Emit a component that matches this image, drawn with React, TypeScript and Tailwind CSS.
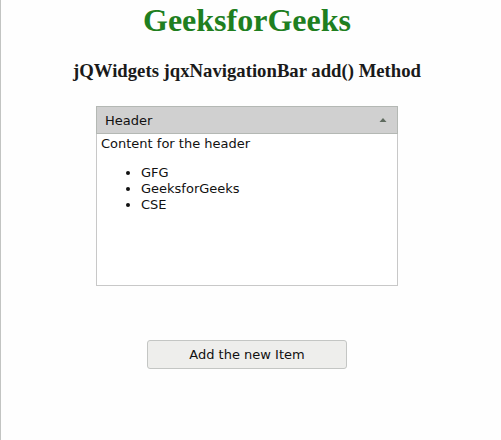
export default function App() {
  const items = ['GFG', 'GeeksforGeeks', 'CSE']

  return (
    <div className="min-h-[440px] w-[501px] bg-[#fefefe]">
      <div className="ml-0 min-h-[440px] w-[493px] border-l border-[#c2c4c2] pb-10">
        <h1 className="pt-[2px] text-center font-['Liberation_Serif',serif] text-[32px] font-bold leading-[37px] text-[#1f7f1f]">
          GeeksforGeeks
        </h1>
        <h3 className="mt-[21px] text-center font-['Liberation_Serif',serif] text-[18.72px] font-bold leading-[22px] text-[#1a1a1a]">
          jQWidgets jqxNavigationBar add() Method
        </h3>

        <div className="mx-auto mt-[24px] w-[302px] font-['DejaVu_Sans',sans-serif] text-[13px] leading-[16px] text-[#111]">
          <div className="flex h-[28px] items-start justify-between border border-[#b4b8b4] bg-[#d0d0d0] pl-[8px] pr-[10px] pt-[6px]">
            <span>Header</span>
            <svg width="8" height="6" viewBox="0 0 8 6" className="mt-[4px]">
              <path d="M0.5 5 L4 1 L7.5 5 Z" fill="#5f6b5f" />
            </svg>
          </div>
          <div className="h-[152px] border-x border-b border-[#c8c8c8] bg-white pl-[4px] pt-[2px]">
            <div>Content for the header</div>
            <ul className="my-[13px] list-disc pl-[40px]">
              {items.map((item) => (
                <li key={item}>{item}</li>
              ))}
            </ul>
          </div>
        </div>

        <div className="mt-[54px] flex justify-center">
          <button className="h-[29px] w-[200px] rounded-[3px] border border-[#c4c6c4] bg-[#eeeeec] font-['DejaVu_Sans',sans-serif] text-[13px] leading-[16px] text-[#111]">
            Add the new Item
          </button>
        </div>
      </div>
    </div>
  )
}
